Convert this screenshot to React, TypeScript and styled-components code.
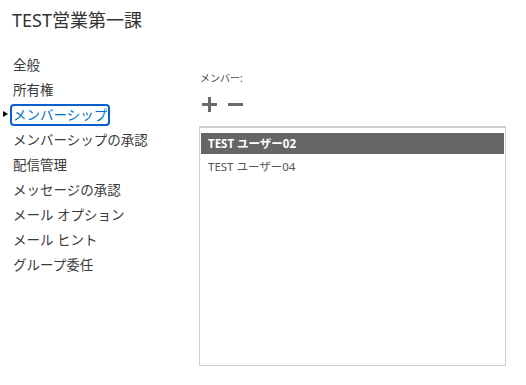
import styled, { createGlobalStyle } from 'styled-components';

const GlobalStyle = createGlobalStyle`
    body {
        margin: 0;
        background: #fff;
        font-family: 'Noto Sans', 'Noto Sans CJK JP', sans-serif;
        color: #333;
    }
`;

const Page = styled.div`
    width: 526px;
    height: 385px;
    position: relative;
    overflow: hidden;
`;

const Title = styled.h1`
    margin: 0;
    padding: 9px 0 0 12px;
    height: 43px;
    box-sizing: border-box;
    font-size: 18px;
    font-weight: normal;
    color: #333;
    line-height: 22px;
`;

const Body = styled.div`
    display: flex;
`;

const Nav = styled.ul`
    list-style: none;
    margin: 0;
    padding: 9px 0 0 0;
    width: 199px;
    flex: none;
`;

const NavItem = styled.li<{ $active?: boolean }>`
    position: relative;
    height: 25px;
    display: flex;
    align-items: center;
    padding-left: 10px;
    font-size: 13.5px;
    color: ${(p) => (p.$active ? '#0072c6' : '#3a3a3a')};
    &::before {
        content: '';
        display: ${(p) => (p.$active ? 'block' : 'none')};
        position: absolute;
        left: 3px;
        top: 9px;
        border-left: 5px solid #000;
        border-top: 3.5px solid transparent;
        border-bottom: 3.5px solid transparent;
    }
`;

const NavLabel = styled.span<{ $active?: boolean }>`
    display: inline-block;
    height: 22px;
    line-height: 19px;
    box-sizing: border-box;
    padding: 0 1px;
    border: 2px solid ${(p) => (p.$active ? '#0a5fcf' : 'transparent')};
    border-radius: 4px;
`;

const Panel = styled.div`
    display: flex;
    flex-direction: column;
    padding-top: 27px;
`;

const FieldLabel = styled.div`
    font-size: 10px;
    color: #444;
    height: 16px;
    line-height: 16px;
    padding-left: 1px;
`;

const Toolbar = styled.div`
    display: flex;
    gap: 11px;
    padding: 11px 0 0 3px;
    height: 29px;
    box-sizing: border-box;
`;

const ToolButton = styled.button`
    border: none;
    background: transparent;
    padding: 0;
    width: 15px;
    height: 15px;
    display: flex;
    cursor: pointer;
`;

const ListBox = styled.div`
    margin-top: 11px;
    width: 307px;
    height: 240px;
    box-sizing: border-box;
    border: 1px solid #c8d0d0;
    border-top-width: 2px;
    padding: 5px 1px 0 1px;
`;

const Row = styled.div<{ $selected?: boolean }>`
    height: 21px;
    line-height: 21px;
    padding-left: 7px;
    font-size: 11.5px;
    margin-bottom: 2px;
    font-weight: ${(p) => (p.$selected ? 'bold' : 'normal')};
    background: ${(p) => (p.$selected ? '#666' : 'transparent')};
    color: ${(p) => (p.$selected ? '#fff' : '#555')};
`;

const PlusIcon = () => (
    <svg width="15" height="15" viewBox="0 0 15 15">
        <rect x="0" y="6" width="15" height="3" fill="#6a6a6a" />
        <rect x="6" y="0" width="3" height="15" fill="#6a6a6a" />
    </svg>
);

const MinusIcon = () => (
    <svg width="15" height="15" viewBox="0 0 15 15">
        <rect x="0" y="6" width="15" height="3" fill="#6a6a6a" />
    </svg>
);

const navItems = [
    '全般',
    '所有権',
    'メンバーシップ',
    'メンバーシップの承認',
    '配信管理',
    'メッセージの承認',
    'メール オプション',
    'メール ヒント',
    'グループ委任',
];

const members = ['TEST ユーザー02', 'TEST ユーザー04'];

export default function App() {
    return (
        <Page>
            <GlobalStyle />
            <Title>TEST営業第一課</Title>
            <Body>
                <Nav>
                    {navItems.map((item) => {
                        const active = item === 'メンバーシップ';
                        return (
                            <NavItem key={item} $active={active}>
                                <NavLabel $active={active}>{item}</NavLabel>
                            </NavItem>
                        );
                    })}
                </Nav>
                <Panel>
                    <FieldLabel>メンバー:</FieldLabel>
                    <Toolbar>
                        <ToolButton aria-label="追加">
                            <PlusIcon />
                        </ToolButton>
                        <ToolButton aria-label="削除">
                            <MinusIcon />
                        </ToolButton>
                    </Toolbar>
                    <ListBox>
                        {members.map((m, i) => (
                            <Row key={m} $selected={i === 0}>
                                {m}
                            </Row>
                        ))}
                    </ListBox>
                </Panel>
            </Body>
        </Page>
    );
}
